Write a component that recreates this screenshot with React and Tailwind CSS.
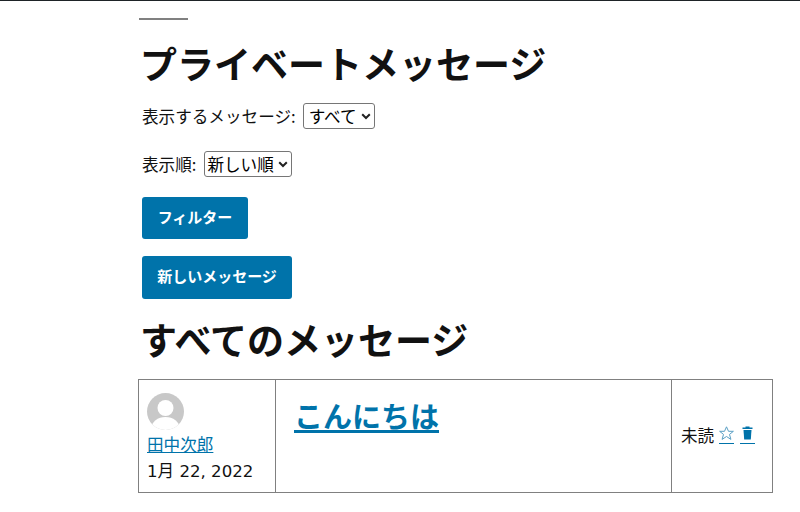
import React from 'react';

const Chevron = () => (
  <svg width="10" height="7" viewBox="0 0 10 7" className="absolute right-[4px] top-[10px] pointer-events-none">
    <path d="M1.200 1.200L5 5l3.800-3.800" fill="none" stroke="#222222" strokeWidth="2" />
  </svg>
);

const Messages = () => {
  return (
    <div className="min-h-screen bg-white border-t border-[#1e2327] text-[#111111] font-['Noto_Sans_CJK_JP',sans-serif] text-[16.6px] overflow-hidden">
      <div className="ml-[138px] mr-[27px]">
        <div className="mt-[17px] ml-px w-[49px] h-[2px] bg-[#808080]"></div>
        <h1 className="mt-[16px] ml-[2px] text-[37px] leading-[54px] font-bold whitespace-nowrap">プライベートメッセージ</h1>

        <div className="mt-[12px] ml-[4px] h-[28px] flex items-center">
          <span>表示するメッセージ:</span>
          <div className="relative ml-[7px]">
            <select className="block appearance-none w-[72px] h-[26px] border border-[#767676] rounded-[3px] bg-white text-black pl-[5px]">
              <option>すべて</option>
            </select>
            <Chevron />
          </div>
        </div>
        <div className="mt-[20px] ml-[4px] h-[28px] flex items-center">
          <span>表示順:</span>
          <div className="relative ml-[8px]">
            <select className="block appearance-none w-[88px] h-[26px] border border-[#767676] rounded-[3px] bg-white text-black pl-[2px]">
              <option>新しい順</option>
            </select>
            <Chevron />
          </div>
        </div>

        <button className="block mt-[19px] ml-[4px] w-[106px] h-[42px] pb-[2px] bg-[#0073aa] text-white text-[15px] font-bold rounded-[3px]">フィルター</button>
        <button className="block mt-[17px] ml-[4px] w-[150px] h-[43px] pb-[2px] bg-[#0073aa] text-white text-[15px] font-bold rounded-[3px]">新しいメッセージ</button>

        <h2 className="mt-[13px] ml-[2px] text-[37px] leading-[54px] font-bold whitespace-nowrap">すべてのメッセージ</h2>

        <div className="mt-[13px] w-[635px] h-[114px] border border-[#808080] flex">
          <div className="w-[137px] border-r border-[#808080] pl-[8px] pt-[13px]">
            <svg width="37" height="37" viewBox="0 0 37 37" className="block">
              <defs>
                <clipPath id="avatarClip"><circle cx="18.5" cy="18.5" r="18.5" /></clipPath>
              </defs>
              <g clipPath="url(#avatarClip)">
                <rect width="37" height="37" fill="#c8c8c8" />
                <circle cx="18.5" cy="15" r="8" fill="#ffffff" />
                <ellipse cx="18.5" cy="35" rx="14" ry="11" fill="#ffffff" />
              </g>
            </svg>
            <a href="#" className="block mt-[1px] text-[#0073aa] underline leading-[26px]">田中次郎</a>
            <div className="leading-[26px] mt-[2px] font-['DejaVu_Sans','Noto_Sans_CJK_JP',sans-serif]">1月 22, 2022</div>
          </div>
          <div className="w-[396px] border-r border-[#808080] pl-[18px] pt-[13px]">
            <a href="#" className="text-[29px] leading-[44px] font-bold text-[#0073aa] underline decoration-[3px]">こんにちは</a>
          </div>
          <div className="flex-1 flex items-center pl-[9px] pb-[2px]">
            <span>未読</span>
            <a href="#" className="ml-[5px] inline-block border-b border-[#0073aa] h-[18px]">
              <svg width="15" height="15" viewBox="0 0 15 15" className="block">
                <path d="M7.500 .8l2 4.500h4.900l-3.900 3.100 1.400 5-4.400-2.900-4.400 2.900 1.400-5L.6 5.300h4.900z" fill="none" stroke="#5a9fc4" strokeWidth="1" />
              </svg>
            </a>
            <a href="#" className="ml-[6px] inline-block border-b border-[#0073aa] h-[18px]">
              <svg width="15" height="15" viewBox="0 0 15 15" className="block">
                <path d="M5.500 .5h4v1h3V3h-10V1.500h3z" fill="#0073aa" />
                <path d="M3.500 4h8l-.7 9.500H4.200z" fill="#0073aa" />
              </svg>
            </a>
          </div>
        </div>
      </div>
    </div>
  );
};

export default Messages;
